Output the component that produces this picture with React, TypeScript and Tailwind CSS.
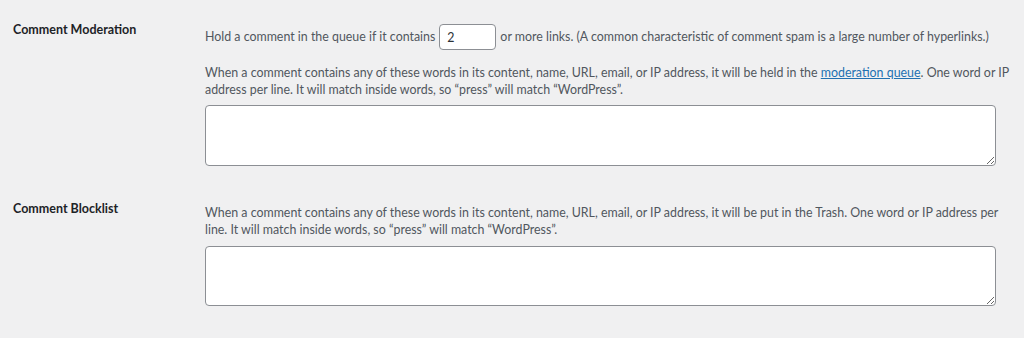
import React, { useState } from 'react';

const font = { fontFamily: 'Lato, "Open Sans", sans-serif' };

const App: React.FC = () => {
  const [maxLinks, setMaxLinks] = useState<string>('2');
  const [moderationKeys, setModerationKeys] = useState<string>('');
  const [blocklistKeys, setBlocklistKeys] = useState<string>('');

  return (
    <div
      className="min-h-[338px] w-full bg-[#f0f0f1] pl-[13px] pr-[28px] text-[12.4px] text-[#50575e]"
      style={font}
    >
      {/* Comment Moderation */}
      <div className="flex">
        <div className="w-[192px] shrink-0 pt-[21px] text-[12.5px] leading-[17px] font-bold text-[#1d2327]">
          Comment Moderation
        </div>
        <div className="min-w-0 flex-1 pt-[24px]">
          <div className="flex h-[26px] items-center whitespace-nowrap">
            <span>Hold a comment in the queue if it contains</span>
            <input
              type="text"
              value={maxLinks}
              onChange={(e) => setMaxLinks(e.target.value)}
              className="mx-[4px] h-[26px] w-[57px] shrink-0 rounded-[4px] border border-[#8c8f94] bg-white px-[7px] text-[12.4px] text-[#2c3338] outline-none"
            />
            <span>or more links. (A common characteristic of comment spam is a large number of hyperlinks.)</span>
          </div>
          <p className="mt-[14px] leading-[17px] whitespace-nowrap">
            When a comment contains any of these words in its content, name, URL, email, or IP address, it will be held in the{' '}
            <a href="#" className="text-[#2271b1] underline">moderation queue</a>. One word or IP
            <br />
            address per line. It will match inside words, so “press” will match “WordPress”.
          </p>
          <textarea
            value={moderationKeys}
            onChange={(e) => setModerationKeys(e.target.value)}
            className="mt-[7px] block h-[61px] w-full rounded-[4px] border border-[#8c8f94] bg-white outline-none"
          />
        </div>
      </div>

      {/* Comment Blocklist */}
      <div className="flex pt-[38px]">
        <div className="-mt-[4px] w-[192px] shrink-0 text-[12.5px] leading-[17px] font-bold text-[#1d2327]">
          Comment Blocklist
        </div>
        <div className="min-w-0 flex-1">
          <p className="leading-[17px] whitespace-nowrap">
            When a comment contains any of these words in its content, name, URL, email, or IP address, it will be put in the Trash. One word or IP address per
            <br />
            line. It will match inside words, so “press” will match “WordPress”.
          </p>
          <textarea
            value={blocklistKeys}
            onChange={(e) => setBlocklistKeys(e.target.value)}
            className="mt-[8px] block h-[60px] w-full rounded-[4px] border border-[#8c8f94] bg-white outline-none"
          />
        </div>
      </div>
    </div>
  );
};

export default App;
